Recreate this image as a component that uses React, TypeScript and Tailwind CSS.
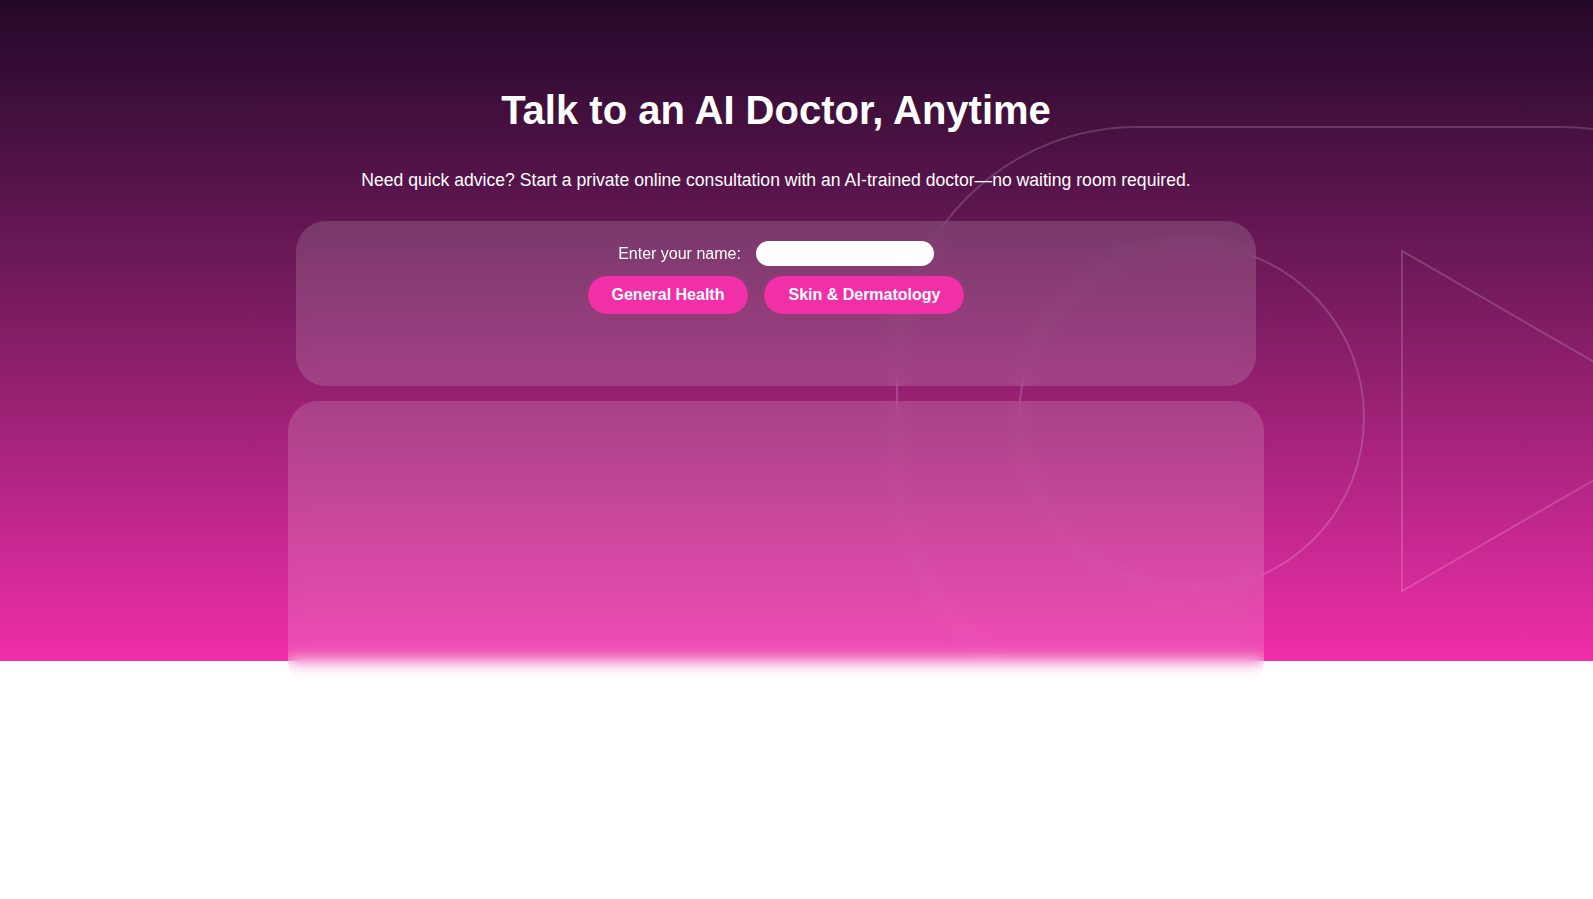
export default function App() {
  return (
    <div className="min-h-screen bg-white font-['Liberation_Sans',Arial,sans-serif]">
      <section className="relative h-[661px] bg-gradient-to-b from-[#240829] to-[#f02ea9]">
        {/* play-style outline shapes behind the cards */}
        <div className="pointer-events-none absolute inset-0 overflow-hidden">
          <svg className="h-full w-full" fill="none" stroke="white" strokeOpacity={0.17} strokeWidth={2}>
            <rect x={897} y={127} width={904} height={579} rx={240} />
            <circle cx={1191.5} cy={417.5} r={172.5} />
            <polygon points="1402,251 1402,591 1696,421" />
          </svg>
        </div>

        <div className="relative flex flex-col items-center pt-[87px] pr-[41px] text-white">
          <h1 className="text-[40px] font-bold leading-[46px]">Talk to an AI Doctor, Anytime</h1>
          <p className="mt-[37px] text-[17.6px] leading-[20px]">
            Need quick advice? Start a private online consultation with an AI-trained doctor—no waiting room required.
          </p>

          <div className="mt-[31px] h-[165px] w-[960px] rounded-[30px] bg-white/15 pt-[20px] backdrop-blur-sm">
            <div className="flex items-center justify-center gap-[15px]">
              <label htmlFor="name" className="text-base leading-[18px]">
                Enter your name:
              </label>
              <input
                id="name"
                type="text"
                className="h-[25px] w-[178px] rounded-full bg-white px-3 text-sm text-black outline-none"
              />
            </div>
            <div className="mt-[10px] flex justify-center gap-4">
              <button className="rounded-full bg-[#f02fa9] px-6 py-[10px] text-base font-bold leading-[18px] text-white">
                General Health
              </button>
              <button className="rounded-full bg-[#f02fa9] px-6 py-[10px] text-base font-bold leading-[18px] text-white">
                Skin &amp; Dermatology
              </button>
            </div>
          </div>

          <div className="mt-[15px] h-[290px] w-[976px] rounded-[30px] bg-white/15 backdrop-blur-sm" />
        </div>
      </section>
    </div>
  );
}
